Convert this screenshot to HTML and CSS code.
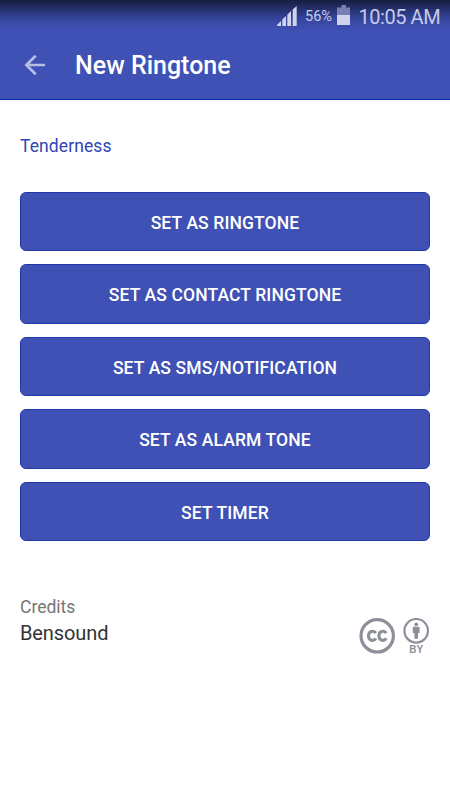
FILE: index.html
```html
<!DOCTYPE html>
<html lang="en">
<head>
<meta charset="utf-8">
<title>New Ringtone</title>
<link rel="stylesheet" href="styles.css">
</head>
<body>
<header class="header">
  <div class="status">
    <svg class="signal" width="20" height="20" viewBox="0 0 20 20"><path d="M0 20v-1l4-4v5zM5.300 20v-6.400l3.700-3.600v10zM10.300 20V8.700L14 5v15zM15.700 20V3.500L19.700 0v20z"/></svg>
    <span class="percent">56%</span>
    <svg class="battery" width="13" height="20" viewBox="0 0 13 20"><path class="empty" d="M4.500 0h4.500v2.500h4V10H0V2.500h4.500z"/><path d="M0 10h13v10H0z"/></svg>
    <span class="clock">10:05 AM</span>
  </div>
  <div class="toolbar">
    <svg class="back" width="22" height="22" viewBox="0 0 22 22"><path d="M21 11H2.500M11.700 1.700L2.300 11l9.400 9.300"/></svg>
    <h1 class="title">New Ringtone</h1>
  </div>
</header>
<main class="content">
  <p class="track">Tenderness</p>
  <div class="actions">
    <button class="action">SET AS RINGTONE</button>
    <button class="action">SET AS CONTACT RINGTONE</button>
    <button class="action">SET AS SMS/NOTIFICATION</button>
    <button class="action">SET AS ALARM TONE</button>
    <button class="action">SET TIMER</button>
  </div>
  <section class="credits">
    <div class="author">
      <p class="label">Credits</p>
      <p class="name">Bensound</p>
    </div>
    <svg class="license" width="72" height="40" viewBox="0 0 72 40">
      <circle cx="18.200" cy="18.800" r="16.200" stroke-width="3.200"/>
      <circle cx="57.200" cy="13.800" r="11.800" stroke-width="2.200"/>
      <path class="cc" d="M16.900 16.200C14.800 12.900 9.500 13.900 9.500 18.800s5.300 5.900 7.400 2.600M27.300 16.200C25.200 12.900 19.900 13.900 19.900 18.800s5.300 5.900 7.400 2.600"/>
      <circle class="solid" cx="57.200" cy="7.300" r="1.900"/>
      <path class="solid" d="M54.400 9.800h5.600q.6 0 .6.600v5.700H59v5.700h-3.600v-5.700h-1.600v-5.700q0-.6.600-.6z"/>
      <text x="50.200" y="36">BY</text>
    </svg>
  </section>
</main>
</body>
</html>
```
FILE: styles.css
```css
* {
  box-sizing: border-box;
}

body {
  margin: 0;
  width: 450px;
  height: 800px;
  overflow: hidden;
  background: #fff;
  font-family: Roboto, "Liberation Sans", sans-serif;
}

h1,
p {
  margin: 0;
}

.header {
  height: 100px;
  border-bottom: 1px solid #0a2c9e;
  background: linear-gradient(#171e40 0, #1b234c 3px, #293577 11px, #3747a0 20px, #3f51b5 31px);
}

.status {
  display: flex;
  align-items: center;
  height: 33px;
  padding-left: 277px;
  color: #c5cbe9;
  fill: #cfd3eb;
  white-space: nowrap;
}

.signal {
  margin-top: -1px;
}

.percent {
  width: 32px;
  margin-left: 8px;
  font-size: 14.500px;
}

.battery {
  margin-top: -3px;
}

.empty {
  fill: #7880b1;
}

.clock {
  margin-left: 8.500px;
  font-size: 20px;
  letter-spacing: -0.450px;
}

.toolbar {
  display: flex;
  align-items: center;
  height: 66px;
  padding-left: 24px;
}

.back {
  margin-top: -2px;
  fill: none;
  stroke: #b5bde4;
  stroke-width: 2.700;
}

.title {
  margin-left: 29px;
  color: #fff;
  font-size: 25px;
  font-weight: 500;
  line-height: 30px;
}

.content {
  padding: 35px 20px 0;
}

.track {
  height: 56.700px;
  color: #3046b5;
  font-size: 17.500px;
  line-height: 22px;
  letter-spacing: 0.100px;
}

.actions {
  display: grid;
  grid-auto-rows: 59.800px;
  gap: 12.700px;
}

.action {
  padding: 2px 0 0;
  border: 1px solid #2038a8;
  border-radius: 6px;
  background: #3f51b5;
  color: #fff;
  font: 500 17.500px/24px Roboto, sans-serif;
  letter-spacing: 0.120px;
}

.credits {
  display: flex;
  justify-content: space-between;
  margin-top: 55px;
}

.label {
  color: #757575;
  font-size: 17.500px;
  line-height: 22px;
}

.name {
  margin-top: 1px;
  color: #333;
  font-size: 20px;
  line-height: 28px;
  letter-spacing: -0.100px;
}

.license {
  margin-top: 21px;
  margin-right: -1px;
  fill: none;
  stroke: #8e9099;
}

.license .cc {
  stroke-width: 3.100;
}

.license .solid {
  fill: #8e9099;
  stroke: none;
}

.license text {
  fill: #8e9099;
  stroke: none;
  font: 700 10px "Liberation Sans", sans-serif;
}
```
